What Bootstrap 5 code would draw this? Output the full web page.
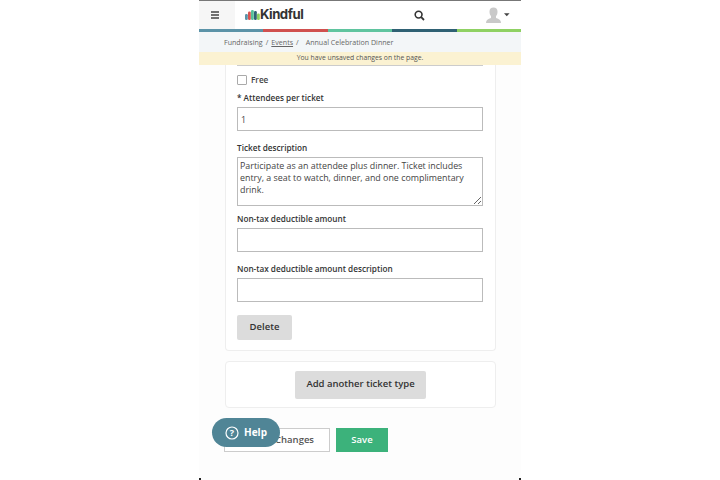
<!doctype html>
<html lang="en"><head><meta charset="utf-8"><title>Kindful</title>
<link href="https://cdn.jsdelivr.net/npm/bootstrap@5.3.0/dist/css/bootstrap.min.css" rel="stylesheet">
<style>
html,body{height:480px;overflow:hidden;background:#fff}
body{font-family:"Open Sans",sans-serif;color:#333;font-size:10px}
.phone{width:322px;height:480px;margin-left:199px;position:relative;overflow:hidden;background:#fdfdfd;border-top:1px solid #777}
.topbar{height:28px;background:#fff}
.burger{width:36px;background:#f6f6f6;padding:0 4px 0 0}
.logo-wrap{margin-left:10px}
.logo-word{font-family:"Inter",sans-serif;font-weight:700;font-size:13.200px;letter-spacing:-.5px;color:#333;line-height:1}
.stripe{height:3px}
.stripe>div{flex:1}
.crumbs{height:20px;background:#f3f6f8;padding-left:25px;font-size:7.100px;color:#666;gap:3px}
.crumbs u{color:#666}
.notice{height:13px;background:#fbf2d2;font-size:6.800px;color:#555}
.content{padding:0 25px 0 26px}
.tcard{background:#fff;border:1px solid #eee;border-top:0;border-radius:0 0 4px 4px;padding:0 12px 0 11px;height:286px}
.rule{height:1px;background:#ccc}
.fbox{width:10px;height:10px;border:1px solid #aaa;border-radius:1px;background:#fff}
.freerow{margin-top:8px;gap:4px}
.freelab{font-size:8.200px;font-weight:600;color:#444;line-height:12px}
.flab{font-weight:600;font-size:8.200px;line-height:12px;color:#333}
.g1{margin-top:6px}
.g2{margin-top:11px}
.g3{margin-top:7px}
.inp{display:block;width:246px;height:24px;border:1px solid #bbb;background:#fff;border-radius:0;padding:0 3px;font-size:8.900px;color:#444;margin-top:3px;line-height:22px;box-shadow:none}
textarea.inp{height:49px;line-height:12px;padding:2px 2px;resize:vertical;font-family:inherit}
.gbtn{background:#dcdcdc;border:0;border-radius:2px;font-weight:600;font-size:9.500px;color:#333;padding:0}
.delbtn{width:55px;height:25px;margin-top:13px}
.addcard{background:#fff;border:1px solid #eee;border-radius:4px;height:47px;margin-top:10px}
.addbtn{width:131px;height:28px}
.actions{margin-top:20px;gap:6px;margin-left:-1px}
.cancel{width:106px;height:24px;border:1px solid #ccc;background:#fff;font-size:9.500px;font-weight:600;color:#555;border-radius:0;padding:0 15px 0 0;text-align:right}
.savebtn{width:52px;height:24px;background:#3cb27b;color:#fff;border:0;border-radius:0;font-size:9.500px;font-weight:600;padding:0}
.helpbtn{position:absolute;left:13px;top:417px;width:68px;height:29px;border-radius:15px;background:#508596;color:#fff;font-size:10px;font-weight:700;gap:5px}
.corner{position:absolute;bottom:0;width:2px;height:2px;background:#222}
</style></head><body>
<div class="phone">
  <div class="topbar d-flex align-items-center">
    <div class="burger h-100 d-flex align-items-center justify-content-center">
      <svg width="8" height="8" viewBox="0 0 8 8"><path d="M0 1h8M0 4h8M0 7h8" stroke="#444" stroke-width="1.300"/></svg>
    </div>
    <div class="logo-wrap d-flex align-items-center">
      <svg width="15" height="10" viewBox="0 0 15 10"><rect x="0" y="4" width="2.800" height="6" rx="1.200" fill="#5b93a8"/><rect x="3" y="1.500" width="2.800" height="8.500" rx="1.200" fill="#d9534f"/><rect x="6" y="0" width="2.800" height="10" rx="1.200" fill="#56c09a"/><rect x="9" y="1" width="2.800" height="9" rx="1.200" fill="#2f6174"/><rect x="12" y="3.500" width="2.800" height="6.500" rx="1.200" fill="#8ccf5f"/></svg>
      <span class="logo-word">Kindful</span>
    </div>
    <svg class="ms-auto" width="11" height="11" viewBox="0 0 11 11" style="margin-right:61px"><circle cx="4.600" cy="4.600" r="3.400" fill="none" stroke="#333" stroke-width="1.600"/><path d="M7.200 7.200 10 10" stroke="#333" stroke-width="1.800"/></svg>
    <svg width="15" height="16" viewBox="0 0 15 16"><path d="M0 16c0-3 2-4 5-5V9C4 8 3.500 6.500 3.500 4.500 3.500 2 5 .5 7.500 .5S11.500 2 11.500 4.500C11.500 6.500 11 8 10 9v2c3 1 5 2 5 5z" fill="#c9c9c9"/></svg>
    <svg width="6" height="4" viewBox="0 0 7 4" style="margin:0 11px 0 3px"><path d="M0 0h6.500L3.250 3.500z" fill="#444"/></svg>
  </div>
  <div class="stripe d-flex"><div style="background:#5b93a8"></div><div style="background:#d0504f"></div><div style="background:#5fc49f"></div><div style="background:#2f6174"></div><div style="background:#8fd163"></div></div>
  <div class="crumbs d-flex align-items-center"><span>Fundraising</span><span>/</span><u>Events</u><span>/</span><span class="ms-1">Annual Celebration Dinner</span></div>
  <div class="notice d-flex align-items-center justify-content-center">You have unsaved changes on the page.</div>
  <div class="content">
    <div class="tcard">
      <div class="rule"></div>
      <div class="freerow d-flex align-items-center">
        <span class="fbox"></span><span class="freelab">Free</span>
      </div>
      <div class="g1"><div class="flab">* Attendees per ticket</div><input class="inp form-control" value="1"></div>
      <div class="g2"><div class="flab">Ticket description</div><textarea class="inp form-control">Participate as an attendee plus dinner. Ticket includes entry, a seat to watch, dinner, and one complimentary drink.</textarea></div>
      <div class="g3"><div class="flab">Non-tax deductible amount</div><input class="inp form-control"></div>
      <div class="g2"><div class="flab">Non-tax deductible amount description</div><input class="inp form-control"></div>
      <button class="btn gbtn delbtn">Delete</button>
    </div>
    <div class="addcard d-flex align-items-center justify-content-center"><button class="btn gbtn addbtn">Add another ticket type</button></div>
    <div class="actions d-flex"><button class="btn cancel">Changes</button><button class="btn savebtn">Save</button></div>
  </div>
  <div class="helpbtn d-flex align-items-center justify-content-center">
    <svg width="14" height="14" viewBox="0 0 14 14"><circle cx="7" cy="7" r="6" fill="none" stroke="#fff" stroke-width="1.200"/><text x="7" y="10" text-anchor="middle" font-size="9" font-weight="700" fill="#fff" font-family="Open Sans">?</text></svg>
    <span>Help</span>
  </div>
  <div class="corner" style="left:0"></div><div class="corner" style="right:0"></div>
</div>
</body></html>
